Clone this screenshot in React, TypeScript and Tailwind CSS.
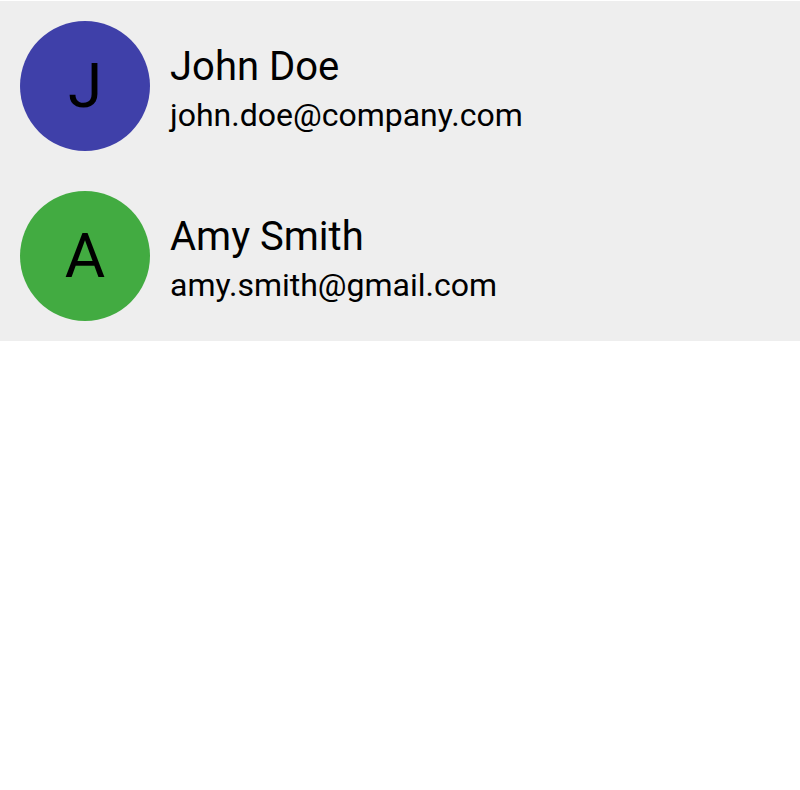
const contacts = [
  { id: 1, initial: "J", name: "John Doe", email: "john.doe@company.com", color: "bg-[#3f40a9]" },
  { id: 2, initial: "A", name: "Amy Smith", email: "amy.smith@gmail.com", color: "bg-[#42ab41]" },
];

export default function App() {
  return (
    <div className="min-h-screen bg-white pt-px font-['Roboto',sans-serif] text-black">
      <ul className="bg-[#eeeeee]">
        {contacts.map((c) => (
          <li key={c.id} className="flex items-center gap-5 p-5">
            <div className={`flex h-[130px] w-[130px] shrink-0 items-center justify-center rounded-full ${c.color}`}>
              <span className="text-[62px] leading-none">{c.initial}</span>
            </div>
            <div className="flex flex-col pt-[6px]">
              <span className="text-[40px] leading-[48px]">{c.name}</span>
              <span className="mt-1 text-[32px] leading-[40px]">{c.email}</span>
            </div>
          </li>
        ))}
      </ul>
    </div>
  );
}
